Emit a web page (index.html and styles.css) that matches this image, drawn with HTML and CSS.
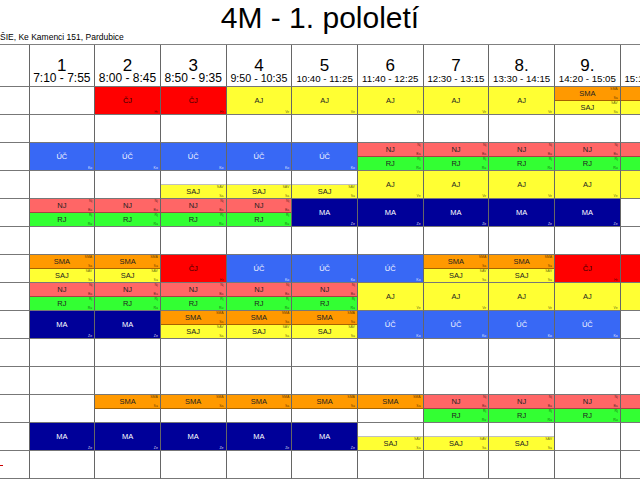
FILE: index.html
```html
<!DOCTYPE html>
<html lang="cs">
<head>
<meta charset="utf-8">
<title>4M - 1. pololetí</title>
<link rel="stylesheet" href="styles.css">
</head>
<body>
<div class="page">
  <h1 class="title">4M - 1. pololetí</h1>
  <div class="school">ŠIE, Ke Kamenci 151, Pardubice</div>
  <div class="grid">
    <!-- header -->
    <div class="c hd"></div>
    <div class="c hd"><span class="n">1</span><span class="tm t12">7:10 - 7:55</span></div>
    <div class="c hd"><span class="n">2</span><span class="tm t12">8:00 - 8:45</span></div>
    <div class="c hd"><span class="n">3</span><span class="tm t12">8:50 - 9:35</span></div>
    <div class="c hd"><span class="n">4</span><span class="tm t11">9:50 - 10:35</span></div>
    <div class="c hd"><span class="n">5</span><span class="tm">10:40 - 11:25</span></div>
    <div class="c hd"><span class="n">6</span><span class="tm">11:40 - 12:25</span></div>
    <div class="c hd"><span class="n">7</span><span class="tm">12:30 - 13:15</span></div>
    <div class="c hd"><span class="n">8.</span><span class="tm">13:30 - 14:15</span></div>
    <div class="c hd"><span class="n">9.</span><span class="tm">14:20 - 15:05</span></div>
    <div class="c hd"><span class="n">10.</span><span class="tm">15:15 - 16:00</span></div>

    <!-- R1 -->
    <div class="c"></div>
    <div class="c"></div>
    <div class="c"><div class="s cj">ČJ<i class="r">Hr</i></div></div>
    <div class="c"><div class="s cj">ČJ<i class="r">Hr</i></div></div>
    <div class="c"><div class="s aj">AJ<i class="r">Ve</i></div></div>
    <div class="c"><div class="s aj">AJ<i class="r">Ve</i></div></div>
    <div class="c"><div class="s aj">AJ<i class="r">Ve</i></div></div>
    <div class="c"><div class="s aj">AJ<i class="r">Ve</i></div></div>
    <div class="c"><div class="s aj">AJ<i class="r">Ve</i></div></div>
    <div class="c"><div class="s h sma">SMA<i class="t">SMA</i><i class="r">Sa</i></div><div class="s h saj">SAJ<i class="t">SAV</i><i class="r">Sa</i></div></div>
    <div class="c"><div class="s h sma">SMA<i class="t">SMA</i><i class="r">Sa</i></div><div class="s h saj">SAJ<i class="t">SAV</i><i class="r">Sa</i></div></div>

    <!-- R2 -->
    <div class="c"></div><div class="c"></div><div class="c"></div><div class="c"></div><div class="c"></div><div class="c"></div><div class="c"></div><div class="c"></div><div class="c"></div><div class="c"></div><div class="c"></div>

    <!-- R3 -->
    <div class="c"></div>
    <div class="c"><div class="s uc">ÚČ<i class="r">Ko</i></div></div>
    <div class="c"><div class="s uc">ÚČ<i class="r">Ko</i></div></div>
    <div class="c"><div class="s uc">ÚČ<i class="r">Ko</i></div></div>
    <div class="c"><div class="s uc">ÚČ<i class="r">Ko</i></div></div>
    <div class="c"><div class="s uc">ÚČ<i class="r">Ko</i></div></div>
    <div class="c"><div class="s h nj">NJ<i class="t">Nj</i><i class="r">Ba</i></div><div class="s h rj">RJ<i class="t">Rj</i><i class="r">Ru</i></div></div>
    <div class="c"><div class="s h nj">NJ<i class="t">Nj</i><i class="r">Ba</i></div><div class="s h rj">RJ<i class="t">Rj</i><i class="r">Ru</i></div></div>
    <div class="c"><div class="s h nj">NJ<i class="t">Nj</i><i class="r">Ba</i></div><div class="s h rj">RJ<i class="t">Rj</i><i class="r">Ru</i></div></div>
    <div class="c"><div class="s h nj">NJ<i class="t">Nj</i><i class="r">Ba</i></div><div class="s h rj">RJ<i class="t">Rj</i><i class="r">Ru</i></div></div>
    <div class="c"><div class="s h nj">NJ<i class="t">Nj</i><i class="r">Ba</i></div><div class="s h rj">RJ<i class="t">Rj</i><i class="r">Ru</i></div></div>

    <!-- R4 -->
    <div class="c"></div>
    <div class="c"></div>
    <div class="c"></div>
    <div class="c"><div class="h e"></div><div class="s h saj">SAJ<i class="t">SAV</i><i class="r">Sa</i></div></div>
    <div class="c"><div class="h e"></div><div class="s h saj">SAJ<i class="t">SAV</i><i class="r">Sa</i></div></div>
    <div class="c"><div class="h e"></div><div class="s h saj">SAJ<i class="t">SAV</i><i class="r">Sa</i></div></div>
    <div class="c"><div class="s aj">AJ<i class="r">Ve</i></div></div>
    <div class="c"><div class="s aj">AJ<i class="r">Ve</i></div></div>
    <div class="c"><div class="s aj">AJ<i class="r">Ve</i></div></div>
    <div class="c"><div class="s aj">AJ<i class="r">Ve</i></div></div>
    <div class="c"><div class="s aj">AJ<i class="r">Ve</i></div></div>

    <!-- R5 -->
    <div class="c"></div>
    <div class="c"><div class="s h nj">NJ<i class="t">Nj</i><i class="r">Ba</i></div><div class="s h rj">RJ<i class="t">Rj</i><i class="r">Ru</i></div></div>
    <div class="c"><div class="s h nj">NJ<i class="t">Nj</i><i class="r">Ba</i></div><div class="s h rj">RJ<i class="t">Rj</i><i class="r">Ru</i></div></div>
    <div class="c"><div class="s h nj">NJ<i class="t">Nj</i><i class="r">Ba</i></div><div class="s h rj">RJ<i class="t">Rj</i><i class="r">Ru</i></div></div>
    <div class="c"><div class="s h nj">NJ<i class="t">Nj</i><i class="r">Ba</i></div><div class="s h rj">RJ<i class="t">Rj</i><i class="r">Ru</i></div></div>
    <div class="c"><div class="s ma">MA<i class="r">Ze</i></div></div>
    <div class="c"><div class="s ma">MA<i class="r">Ze</i></div></div>
    <div class="c"><div class="s ma">MA<i class="r">Ze</i></div></div>
    <div class="c"><div class="s ma">MA<i class="r">Ze</i></div></div>
    <div class="c"><div class="s ma">MA<i class="r">Ze</i></div></div>
    <div class="c"></div>

    <!-- R6 -->
    <div class="c"></div><div class="c"></div><div class="c"></div><div class="c"></div><div class="c"></div><div class="c"></div><div class="c"></div><div class="c"></div><div class="c"></div><div class="c"></div><div class="c"></div>

    <!-- R7 -->
    <div class="c"></div>
    <div class="c"><div class="s h sma">SMA<i class="t">SMA</i><i class="r">Sa</i></div><div class="s h saj">SAJ<i class="t">SAV</i><i class="r">Sa</i></div></div>
    <div class="c"><div class="s h sma">SMA<i class="t">SMA</i><i class="r">Sa</i></div><div class="s h saj">SAJ<i class="t">SAV</i><i class="r">Sa</i></div></div>
    <div class="c"><div class="s cj">ČJ<i class="r">Hr</i></div></div>
    <div class="c"><div class="s uc">ÚČ<i class="r">Ko</i></div></div>
    <div class="c"><div class="s uc">ÚČ<i class="r">Ko</i></div></div>
    <div class="c"><div class="s uc">ÚČ<i class="r">Ko</i></div></div>
    <div class="c"><div class="s h sma">SMA<i class="t">SMA</i><i class="r">Sa</i></div><div class="s h saj">SAJ<i class="t">SAV</i><i class="r">Sa</i></div></div>
    <div class="c"><div class="s h sma">SMA<i class="t">SMA</i><i class="r">Sa</i></div><div class="s h saj">SAJ<i class="t">SAV</i><i class="r">Sa</i></div></div>
    <div class="c"><div class="s cj">ČJ<i class="r">Hr</i></div></div>
    <div class="c"><div class="s cj">ČJ<i class="r">Hr</i></div></div>

    <!-- R8 -->
    <div class="c"></div>
    <div class="c"><div class="s h nj">NJ<i class="t">Nj</i><i class="r">Ba</i></div><div class="s h rj">RJ<i class="t">Rj</i><i class="r">Ru</i></div></div>
    <div class="c"><div class="s h nj">NJ<i class="t">Nj</i><i class="r">Ba</i></div><div class="s h rj">RJ<i class="t">Rj</i><i class="r">Ru</i></div></div>
    <div class="c"><div class="s h nj">NJ<i class="t">Nj</i><i class="r">Ba</i></div><div class="s h rj">RJ<i class="t">Rj</i><i class="r">Ru</i></div></div>
    <div class="c"><div class="s h nj">NJ<i class="t">Nj</i><i class="r">Ba</i></div><div class="s h rj">RJ<i class="t">Rj</i><i class="r">Ru</i></div></div>
    <div class="c"><div class="s h nj">NJ<i class="t">Nj</i><i class="r">Ba</i></div><div class="s h rj">RJ<i class="t">Rj</i><i class="r">Ru</i></div></div>
    <div class="c"><div class="s aj">AJ<i class="r">Ve</i></div></div>
    <div class="c"><div class="s aj">AJ<i class="r">Ve</i></div></div>
    <div class="c"><div class="s aj">AJ<i class="r">Ve</i></div></div>
    <div class="c"><div class="s aj">AJ<i class="r">Ve</i></div></div>
    <div class="c"><div class="s aj">AJ<i class="r">Ve</i></div></div>

    <!-- R9 -->
    <div class="c"></div>
    <div class="c"><div class="s ma">MA<i class="r">Ze</i></div></div>
    <div class="c"><div class="s ma">MA<i class="r">Ze</i></div></div>
    <div class="c"><div class="s h sma">SMA<i class="t">SMA</i><i class="r">Sa</i></div><div class="s h saj">SAJ<i class="t">SAV</i><i class="r">Sa</i></div></div>
    <div class="c"><div class="s h sma">SMA<i class="t">SMA</i><i class="r">Sa</i></div><div class="s h saj">SAJ<i class="t">SAV</i><i class="r">Sa</i></div></div>
    <div class="c"><div class="s h sma">SMA<i class="t">SMA</i><i class="r">Sa</i></div><div class="s h saj">SAJ<i class="t">SAV</i><i class="r">Sa</i></div></div>
    <div class="c"><div class="s uc">ÚČ<i class="r">Ko</i></div></div>
    <div class="c"><div class="s uc">ÚČ<i class="r">Ko</i></div></div>
    <div class="c"><div class="s uc">ÚČ<i class="r">Ko</i></div></div>
    <div class="c"><div class="s uc">ÚČ<i class="r">Ko</i></div></div>
    <div class="c"></div>

    <!-- R10 -->
    <div class="c"></div><div class="c"></div><div class="c"></div><div class="c"></div><div class="c"></div><div class="c"></div><div class="c"></div><div class="c"></div><div class="c"></div><div class="c"></div><div class="c"></div>
    <!-- R11 -->
    <div class="c"></div><div class="c"></div><div class="c"></div><div class="c"></div><div class="c"></div><div class="c"></div><div class="c"></div><div class="c"></div><div class="c"></div><div class="c"></div><div class="c"></div>

    <!-- R12 -->
    <div class="c"></div>
    <div class="c"></div>
    <div class="c"><div class="s h sma">SMA<i class="t">SMA</i><i class="r">Sa</i></div><div class="h e"></div></div>
    <div class="c"><div class="s h sma">SMA<i class="t">SMA</i><i class="r">Sa</i></div><div class="h e"></div></div>
    <div class="c"><div class="s h sma">SMA<i class="t">SMA</i><i class="r">Sa</i></div><div class="h e"></div></div>
    <div class="c"><div class="s h sma">SMA<i class="t">SMA</i><i class="r">Sa</i></div><div class="h e"></div></div>
    <div class="c"><div class="s h sma">SMA<i class="t">SMA</i><i class="r">Sa</i></div><div class="h e"></div></div>
    <div class="c"><div class="s h nj">NJ<i class="t">Nj</i><i class="r">Ba</i></div><div class="s h rj">RJ<i class="t">Rj</i><i class="r">Ru</i></div></div>
    <div class="c"><div class="s h nj">NJ<i class="t">Nj</i><i class="r">Ba</i></div><div class="s h rj">RJ<i class="t">Rj</i><i class="r">Ru</i></div></div>
    <div class="c"><div class="s h nj">NJ<i class="t">Nj</i><i class="r">Ba</i></div><div class="s h rj">RJ<i class="t">Rj</i><i class="r">Ru</i></div></div>
    <div class="c"><div class="s h nj">NJ<i class="t">Nj</i><i class="r">Ba</i></div><div class="s h rj">RJ<i class="t">Rj</i><i class="r">Ru</i></div></div>

    <!-- R13 -->
    <div class="c"></div>
    <div class="c"><div class="s ma">MA<i class="r">Ze</i></div></div>
    <div class="c"><div class="s ma">MA<i class="r">Ze</i></div></div>
    <div class="c"><div class="s ma">MA<i class="r">Ze</i></div></div>
    <div class="c"><div class="s ma">MA<i class="r">Ze</i></div></div>
    <div class="c"><div class="s ma">MA<i class="r">Ze</i></div></div>
    <div class="c"><div class="h e"></div><div class="s h saj">SAJ<i class="t">SAV</i><i class="r">Sa</i></div></div>
    <div class="c"><div class="h e"></div><div class="s h saj">SAJ<i class="t">SAV</i><i class="r">Sa</i></div></div>
    <div class="c"><div class="h e"></div><div class="s h saj">SAJ<i class="t">SAV</i><i class="r">Sa</i></div></div>
    <div class="c"></div>
    <div class="c"></div>

    <!-- R14 -->
    <div class="c"><span class="mark"></span></div><div class="c"></div><div class="c"></div><div class="c"></div><div class="c"></div><div class="c"></div><div class="c"></div><div class="c"></div><div class="c"></div><div class="c"></div><div class="c"></div>
  </div>
</div>
</body>
</html>
```

FILE: styles.css
```css
html, body {
  margin: 0;
  padding: 0;
  background: #fff;
}

body {
  width: 640px;
  height: 480px;
  overflow: hidden;
  font-family: "Liberation Sans", Arial, sans-serif;
  color: #000;
}

.page {
  width: 640px;
  overflow: hidden;
}

.title {
  margin: 0;
  padding-top: 3px;
  height: 30px;
  line-height: 30px;
  font-size: 30px;
  font-weight: normal;
  text-align: center;
}

.school {
  height: 9px;
  line-height: 9px;
  margin-bottom: 2px;
  font-size: 8.5px;
  white-space: nowrap;
}

.grid {
  display: grid;
  grid-template-columns: 29.5px repeat(10, 65.7px);
  grid-template-rows: 42px;
  grid-auto-rows: 28px;
  border-top: 1px solid #808080;
  width: max-content;
}

.c {
  box-sizing: border-box;
  border-right: 1px solid #666;
  border-bottom: 1px solid #777;
  display: flex;
  flex-direction: column;
  min-width: 0;
  position: relative;
}

.hd {
  justify-content: flex-end;
  align-items: center;
  padding-bottom: 2px;
  white-space: nowrap;
}

.n {
  font-size: 17px;
  line-height: 15px;
}

.tm {
  font-size: 9.7px;
  line-height: 11px;
}

.tm.t12 { font-size: 12px; }
.tm.t11 { font-size: 10.7px; }

.s {
  flex: 1;
  display: flex;
  align-items: center;
  justify-content: center;
  position: relative;
  font-size: 7.5px;
  color: #222;
  min-height: 0;
}

.h {
  flex: 1 1 0;
  font-size: 7.5px;
}

.h:first-child {
  border-bottom: 1px solid rgba(0, 0, 0, 0.35);
}

.h.e:first-child {
  border-bottom-color: rgba(0, 0, 0, 0.25);
}

.cj { background: #ff0000; color: #300; }
.aj { background: #ffff33; }
.saj { background: #ffff33; }
.uc { background: #3868f5; color: #f4f6ff; }
.ma { background: #000099; color: #fff; }
.nj { background: #ff6666; }
.rj { background: #33ff33; }
.sma { background: #ff9900; }

.s i {
  position: absolute;
  right: 2px;
  font-style: normal;
  font-size: 3.5px;
  line-height: 4px;
  color: rgba(0, 0, 0, 0.65);
}

.s i.t { top: 0; }
.s i.r { bottom: 0; }

.uc i, .ma i { color: rgba(255, 255, 255, 0.85); }

.mark {
  position: absolute;
  left: 0;
  top: 14px;
  width: 3px;
  height: 1px;
  background: #c00;
}
```
